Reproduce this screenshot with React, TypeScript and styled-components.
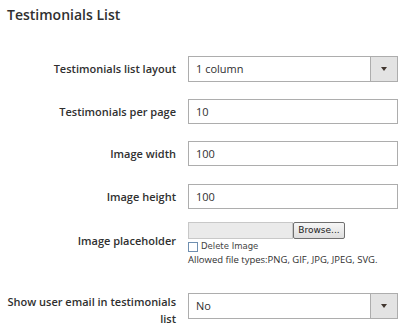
import styled, { createGlobalStyle } from 'styled-components'

const GlobalStyle = createGlobalStyle`
    body {
        margin: 0;
        background: #ffffff;
        font-family: "Open Sans", "DejaVu Sans", sans-serif;
        color: #303030;
    }
`

const Page = styled.div`
    padding: 6px 11px 0 6px;
    width: 409px;
    box-sizing: border-box;
`

const Title = styled.h2`
    margin: 0 0 33px 1px;
    font-size: 14px;
    font-weight: 600;
    line-height: 17px;
    color: #303030;
`

const Field = styled.div<{ $gap: number }>`
    display: grid;
    grid-template-columns: 170px 210px;
    column-gap: 12px;
    margin-bottom: ${({ $gap }) => $gap}px;
`

const Label = styled.label<{ $top: number }>`
    text-align: right;
    font-size: 11px;
    font-weight: 600;
    line-height: 17px;
    color: #303030;
    padding-top: ${({ $top }) => $top}px;
`

const TextInput = styled.div`
    height: 25px;
    box-sizing: border-box;
    border: 1px solid #adadad;
    background: #fff;
    font-size: 11px;
    line-height: 23px;
    padding: 0 7px;
    color: #303030;
`

const Select = styled.div`
    height: 26px;
    box-sizing: border-box;
    border: 1px solid #adadad;
    background: #fff;
    display: flex;
    font-size: 11px;
    color: #303030;
`

const SelectValue = styled.span`
    flex: 1;
    line-height: 24px;
    padding: 0 7px;
`

const SelectButton = styled.span`
    width: 26px;
    border-left: 1px solid #adadad;
    background: #e3e3e3;
    display: flex;
    align-items: center;
    justify-content: center;

    &::after {
        content: '';
        border-left: 3px solid transparent;
        border-right: 3px solid transparent;
        border-top: 4px solid #41362f;
    }
`

const FileBox = styled.div`
    display: flex;
    flex-direction: column;
`

const FileRow = styled.div`
    display: flex;
    height: 17px;
`

const FilePath = styled.div`
    width: 105px;
    box-sizing: border-box;
    border: 1px solid #c8c8c8;
    background: #eaeaea;
`

const BrowseButton = styled.div`
    width: 52px;
    box-sizing: border-box;
    border: 1px solid #707070;
    border-radius: 2px;
    background: linear-gradient(#f6f6f6, #dedede);
    font-family: "DejaVu Sans", sans-serif;
    font-size: 9px;
    line-height: 15px;
    text-align: center;
    color: #222;
`

const CheckRow = styled.div`
    display: flex;
    align-items: center;
    gap: 3px;
    margin-top: 2px;
    font-family: "DejaVu Sans", sans-serif;
    font-size: 8.5px;
    color: #444;
    line-height: 11px;
`

const CheckBox = styled.span`
    width: 8px;
    height: 8px;
    border: 1px solid #6f8fb0;
    background: #fff;
`

const Note = styled.div`
    margin-top: 1px;
    font-size: 9.5px;
    line-height: 13px;
    color: #303030;
`

export default function App() {
    return (
        <>
            <GlobalStyle />
            <Page>
                <Title>Testimonials List</Title>
                <Field $gap={17}>
                    <Label $top={4}>Testimonials list layout</Label>
                    <Select>
                        <SelectValue>1 column</SelectValue>
                        <SelectButton />
                    </Select>
                </Field>
                <Field $gap={17}>
                    <Label $top={4}>Testimonials per page</Label>
                    <TextInput>10</TextInput>
                </Field>
                <Field $gap={18}>
                    <Label $top={4}>Image width</Label>
                    <TextInput>100</TextInput>
                </Field>
                <Field $gap={13}>
                    <Label $top={4}>Image height</Label>
                    <TextInput>100</TextInput>
                </Field>
                <Field $gap={27}>
                    <Label $top={10}>Image placeholder</Label>
                    <FileBox>
                        <FileRow>
                            <FilePath />
                            <BrowseButton>Browse...</BrowseButton>
                        </FileRow>
                        <CheckRow>
                            <CheckBox />
                            Delete Image
                        </CheckRow>
                        <Note>Allowed file types:PNG, GIF, JPG, JPEG, SVG.</Note>
                    </FileBox>
                </Field>
                <Field $gap={0}>
                    <Label $top={0}>Show user email in testimonials list</Label>
                    <Select>
                        <SelectValue>No</SelectValue>
                        <SelectButton />
                    </Select>
                </Field>
            </Page>
        </>
    )
}
